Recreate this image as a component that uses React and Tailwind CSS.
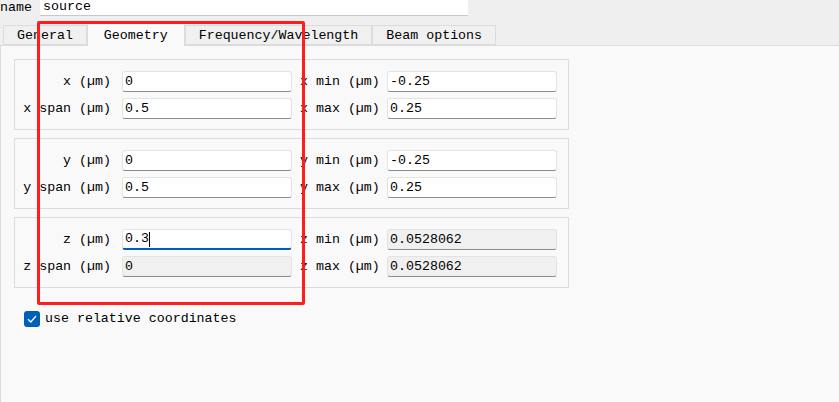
import { useState } from 'react';

const mono = { fontFamily: '"Liberation Mono", "DejaVu Sans Mono", monospace' };

const Field = ({ value, disabled, focused }) => {
  if (focused) {
    return (
      <div className="h-[21px] w-[170px] bg-white border border-[#e5e5e5] border-b-2 border-b-[#005fb8] rounded-[3px] flex items-center pl-[2px]">
        <span>{value}</span>
        <span className="w-px h-[15px] bg-black" />
      </div>
    );
  }
  return (
    <div
      className={
        'h-[21px] w-[170px] border border-[#e3e3e3] border-b-[#8c8c8c] rounded-[3px] flex items-center pl-[2px] ' +
        (disabled ? 'bg-[#f0f0f0]' : 'bg-white')
      }
    >
      {value}
    </div>
  );
};

const Row = ({ label1, value1, label2, value2, d1, d2, focus1 }) => (
  <div className="flex items-center h-[21px]">
    <div className="w-[96px] text-right whitespace-pre">{label1}</div>
    <div className="ml-[11px]">
      <Field value={value1} disabled={d1} focused={focus1} />
    </div>
    <div className="ml-[8px] w-[78px] whitespace-pre">{label2}</div>
    <div className="ml-[9px]">
      <Field value={value2} disabled={d2} />
    </div>
  </div>
);

const Group = ({ rows }) => (
  <div className="w-[555px] h-[71px] border border-[#dcdcdc] pt-[11px] flex flex-col gap-[6px] mb-[8px]">
    {rows.map((r, i) => (
      <Row key={i} {...r} />
    ))}
  </div>
);

const tabs = ['General', 'Geometry', 'Frequency/Wavelength', 'Beam options'];

export default function App() {
  const [active, setActive] = useState(1);
  const [relative, setRelative] = useState(true);

  const groups = [
    [
      { label1: 'x (µm)', value1: '0', label2: 'x min (µm)', value2: '-0.25' },
      { label1: 'x span (µm)', value1: '0.5', label2: 'x max (µm)', value2: '0.25' },
    ],
    [
      { label1: 'y (µm)', value1: '0', label2: 'y min (µm)', value2: '-0.25' },
      { label1: 'y span (µm)', value1: '0.5', label2: 'y max (µm)', value2: '0.25' },
    ],
    [
      { label1: 'z (µm)', value1: '0.3', focus1: true, label2: 'z min (µm)', value2: '0.0528062', d2: true },
      { label1: 'z span (µm)', value1: '0', d1: true, label2: 'z max (µm)', value2: '0.0528062', d2: true },
    ],
  ];

  return (
    <div className="relative w-[839px] h-[402px] bg-[#efefef] overflow-hidden text-[13.3px] text-black flex flex-col" style={mono}>
      {/* name row */}
      <div className="flex h-[16px] items-center">
        <span className="w-[40px] leading-[14px]">name</span>
        <div className="w-[428px] h-[16px] bg-white border-b border-[#c8c8c8] pl-[3px] leading-[14px]">source</div>
      </div>

      {/* tabs */}
      <div className="flex pl-[3px] mt-[7px] h-[22px] items-end relative z-10">
        {tabs.map((t, i) =>
          i === active ? (
            <div
              key={t}
              onClick={() => setActive(i)}
              className="h-[23px] -mb-px px-[16px] pt-[1px] bg-[#f9f9f9] border border-b-0 border-[#dcdcdc] flex items-center cursor-default"
            >
              {t}
            </div>
          ) : (
            <div
              key={t}
              onClick={() => setActive(i)}
              className="h-[20px] px-[13px] pt-[2px] bg-[#f0f0f0] border border-[#dcdcdc] flex items-center cursor-default"
            >
              {t}
            </div>
          )
        )}
      </div>

      {/* panel */}
      <div className="flex-1 bg-[#f9f9f9] border-t border-l border-[#dcdcdc] pl-[13px] pt-[13px]">
        {groups.map((g, i) => (
          <Group key={i} rows={g} />
        ))}
        <div className="flex items-center mt-[21px] ml-[10px]">
          <button
            onClick={() => setRelative(!relative)}
            className={
              'w-[16px] h-[16px] rounded-[3px] flex items-center justify-center ' +
              (relative ? 'bg-[#005fb8]' : 'bg-white border border-[#8c8c8c]')
            }
          >
            {relative && (
              <svg width="10" height="8" viewBox="0 0 10 8" fill="none">
                <path d="M1 4.2 L3.8 7 L9 1" stroke="white" strokeWidth="1.3" />
              </svg>
            )}
          </button>
          <span className="ml-[5px]">use relative coordinates</span>
        </div>
      </div>

      {/* red annotation box */}
      <div className="absolute left-[37px] top-[21px] w-[268px] h-[284px] border-[3px] border-[#ff1c1c] rounded-[2px] pointer-events-none z-20" />
    </div>
  );
}
